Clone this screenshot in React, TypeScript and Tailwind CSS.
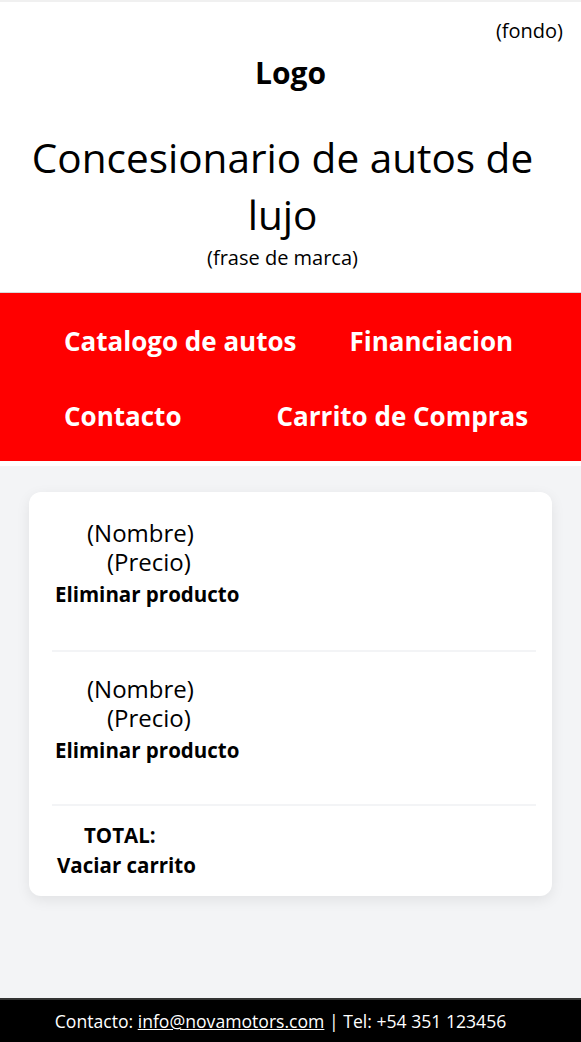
import React from 'react';

const font = { fontFamily: '"Open Sans", "Noto Sans", sans-serif' };

function CartItem({ last }: { last?: boolean }) {
  return (
    <div className={last ? 'pt-[22px] pb-[39px] border-b-2 border-[#f3f4f6]' : 'pt-[22px] pb-[41px] border-b-2 border-[#f3f4f6]'}>
      <p className="pl-[35px] text-[24px] leading-[29px]">(Nombre)</p>
      <p className="pl-[55px] text-[24px] leading-[29px]">(Precio)</p>
      <button className="mt-[3px] pl-[3px] text-[20.5px] font-bold leading-[30px]">Eliminar producto</button>
    </div>
  );
}

export default function App() {
  return (
    <div className="min-h-[1042px] flex flex-col bg-white text-black" style={font}>
      <header className="border-t-2 border-[#f0f0f0] pb-[21px]">
        <p className="pr-[18px] pt-[15px] text-right text-[20px] leading-[27px]">(fondo)</p>
        <h2 className="mt-[8px] text-center text-[30px] font-bold leading-[41px]">Logo</h2>
        <div className="pr-[16px]">
          <h1 className="mt-[36px] px-[20px] text-center text-[40.5px] leading-[57px]">Concesionario de autos de lujo</h1>
          <p className="mt-[1px] text-center text-[20px] leading-[27px]">(frase de marca)</p>
        </div>
      </header>

      <nav className="border-t border-[#d9d9d9] bg-[#ff0000] text-white text-[26px] font-bold pt-[31px] pb-[27px]">
        <div className="flex pl-[64px] gap-[53px] leading-[35px]">
          <a>Catalogo de autos</a>
          <a>Financiacion</a>
        </div>
        <div className="flex pl-[64px] gap-[95px] mt-[40px] leading-[35px]">
          <a>Contacto</a>
          <a>Carrito de Compras</a>
        </div>
      </nav>

      <main className="mt-[5px] flex-1 bg-[#f3f4f6] px-[29px] pt-[26px] pb-[100px]">
        <div className="rounded-xl bg-white pl-[23px] pr-[16px] pt-[4px] pb-[16px] shadow-[0_4px_14px_rgba(0,0,0,0.08)]">
          <CartItem />
          <CartItem last />
          <div className="pt-[14px]">
            <p className="pl-[32px] text-[20.5px] font-bold leading-[30px]">TOTAL:</p>
            <button className="pl-[5px] text-[20.5px] font-bold leading-[30px]">Vaciar carrito</button>
          </div>
        </div>
      </main>

      <footer className="border-t-2 border-[#333] bg-black py-[8px] pr-[20px] text-center text-[17.6px] text-white leading-[26px]">
        Contacto: <a className="underline">info@novamotors.com</a> | Tel: +54 351 123456
      </footer>
    </div>
  );
}
